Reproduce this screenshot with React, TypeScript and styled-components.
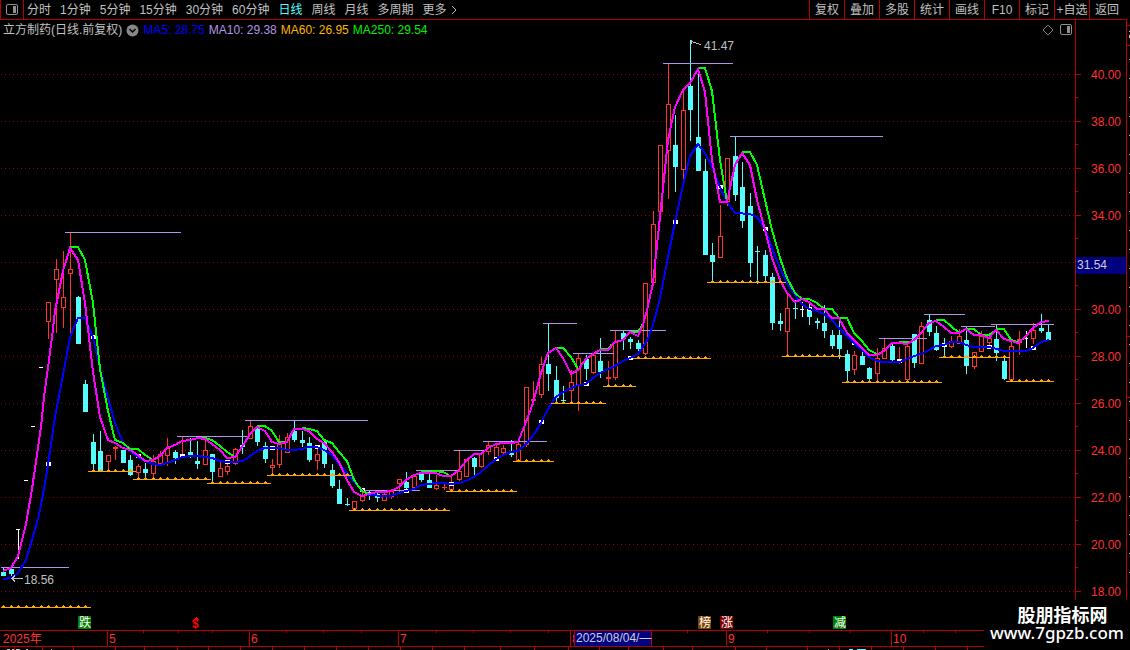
import React from "react";
import styled, { createGlobalStyle } from "styled-components";

const SANS = '"Liberation Sans", "Noto Sans CJK SC", sans-serif';
const RED = "#b80000";

const GlobalStyle = createGlobalStyle`
  body {
    margin: 0;
    background: #000;
    color: #c0c0c0;
    font: 12px/16px ${SANS};
    overflow: hidden;
  }
`;

/* ---------- data ---------- */

type Kind = "u" | "d" | "w";
type Candle = [Kind, number, number, number, number];

// kind, high, body top, body bottom, low (one entry per trading day)
const candles: Candle[] = [
  ["d", 567, 572, 576, 576], ["d", 567, 569, 574, 579], ["w", 529, 529, 530, 559],
  ["w", 480, 480, 481, 481], ["w", 426, 426, 427, 427], ["w", 367, 367, 368, 368],
  ["u", 302, 302, 322, 339], ["u", 259, 269, 280, 333], ["u", 251, 297, 308, 328],
  ["u", 232, 269, 274, 336], ["d", 296, 297, 344, 344], ["d", 380, 384, 412, 412],
  ["d", 434, 442, 464, 470], ["d", 431, 451, 471, 471], ["u", 455, 455, 462, 470],
  ["u", 446, 447, 449, 460], ["d", 450, 450, 463, 463], ["d", 455, 460, 475, 476],
  ["u", 464, 466, 473, 478], ["d", 463, 469, 473, 477], ["u", 455, 461, 474, 479],
  ["u", 451, 454, 464, 464], ["u", 438, 448, 456, 466], ["d", 450, 452, 458, 464],
  ["u", 437, 454, 456, 456], ["d", 438, 452, 455, 458], ["d", 441, 461, 464, 469],
  ["u", 438, 450, 465, 465], ["d", 454, 454, 472, 483], ["u", 462, 468, 477, 477],
  ["u", 463, 466, 472, 475], ["u", 448, 449, 464, 465], ["d", 430, 445, 447, 454],
  ["u", 420, 426, 439, 439], ["d", 427, 429, 442, 446], ["d", 442, 446, 459, 463],
  ["u", 459, 465, 468, 473], ["u", 435, 443, 465, 468], ["u", 433, 437, 453, 453],
  ["d", 421, 431, 440, 442], ["d", 431, 440, 443, 447], ["d", 437, 443, 460, 462],
  ["u", 447, 454, 461, 470], ["d", 440, 442, 464, 468], ["d", 464, 470, 486, 488],
  ["d", 480, 489, 504, 504], ["d", 498, 504, 505, 506], ["u", 501, 501, 509, 509],
  ["u", 492, 495, 501, 502], ["d", 490, 492, 495, 500], ["d", 493, 494, 498, 502],
  ["u", 492, 494, 501, 501], ["u", 489, 491, 497, 499], ["u", 479, 479, 484, 492],
  ["d", 472, 482, 488, 490], ["u", 475, 476, 488, 488], ["d", 472, 473, 480, 482],
  ["d", 474, 480, 488, 488], ["u", 475, 485, 489, 490], ["u", 483, 487, 488, 490],
  ["u", 477, 485, 490, 490], ["u", 451, 471, 480, 481], ["u", 459, 459, 477, 477],
  ["d", 457, 458, 467, 475], ["u", 452, 453, 467, 468], ["u", 442, 445, 452, 455],
  ["u", 445, 447, 459, 460], ["u", 445, 448, 453, 454], ["d", 440, 452, 455, 457],
  ["u", 442, 444, 462, 462], ["u", 387, 387, 445, 447], ["u", 381, 399, 401, 401],
  ["u", 357, 364, 395, 398], ["d", 323, 364, 374, 391], ["d", 366, 380, 398, 403],
  ["d", 386, 400, 401, 403], ["u", 370, 382, 391, 401], ["u", 353, 358, 385, 411],
  ["d", 355, 359, 369, 380], ["u", 354, 355, 373, 374], ["d", 338, 361, 372, 378],
  ["u", 361, 377, 379, 386], ["u", 331, 342, 378, 380], ["d", 331, 333, 339, 350],
  ["d", 337, 339, 342, 349], ["d", 340, 343, 349, 354], ["u", 283, 283, 354, 355],
  ["u", 211, 224, 283, 286], ["u", 145, 145, 212, 212], ["u", 63, 104, 151, 199],
  ["d", 115, 145, 167, 192], ["u", 90, 110, 170, 180], ["d", 40, 86, 110, 141],
  ["d", 74, 137, 171, 171], ["d", 159, 171, 255, 255], ["d", 243, 255, 262, 281],
  ["u", 205, 236, 258, 258], ["u", 158, 158, 202, 206], ["d", 137, 156, 195, 201],
  ["d", 162, 187, 221, 228], ["d", 193, 206, 263, 277], ["d", 246, 251, 252, 284],
  ["d", 250, 255, 276, 282], ["d", 273, 277, 323, 330], ["d", 313, 321, 324, 331],
  ["u", 295, 308, 332, 356], ["d", 300, 308, 309, 319], ["w", 302, 309, 310, 317],
  ["d", 303, 307, 317, 325], ["d", 318, 321, 323, 329], ["d", 305, 323, 331, 338],
  ["d", 330, 335, 346, 349], ["d", 320, 335, 349, 359], ["d", 350, 354, 371, 382],
  ["u", 351, 355, 370, 375], ["d", 347, 356, 365, 365], ["d", 367, 368, 379, 382],
  ["u", 348, 358, 374, 382], ["u", 338, 348, 359, 359], ["d", 343, 346, 360, 361],
  ["u", 347, 361, 362, 364], ["u", 345, 346, 380, 380], ["d", 334, 334, 363, 368],
  ["u", 322, 326, 364, 364], ["d", 314, 320, 332, 336], ["d", 326, 333, 350, 351],
  ["d", 338, 344, 346, 355], ["u", 336, 341, 347, 348], ["u", 329, 336, 344, 344],
  ["d", 327, 340, 366, 374], ["u", 352, 352, 367, 369], ["u", 331, 336, 352, 352],
  ["u", 334, 338, 343, 347], ["d", 325, 339, 353, 361], ["d", 356, 361, 379, 380],
  ["u", 342, 346, 380, 380], ["u", 331, 339, 343, 355], ["w", 331, 338, 339, 348],
  ["u", 323, 330, 339, 344], ["d", 314, 328, 331, 333], ["d", 325, 332, 340, 340],
];

const dayX = (i: number) => Math.round(3.26 + 7.465 * i);

const magenta =
  "3,571 11,568 18,556 26,524 32,489 41,427 44,397 49,360 52,337 55,311 63,271 70,248 78,260 85,303 93,372 100,417 108,440 115,443 123,448 130,450 138,455 145,461 153,460 160,456 167,448 175,445 182,441 190,440 198,438 205,439 212,444 220,450 227,458 235,457 242,447 250,434 257,427 265,431 272,442 279,444 287,442 294,429 302,429 309,431 317,439 324,443 332,452 339,462 347,480 354,492 362,496 369,494 377,492 384,492 391,491 399,487 406,480 414,475 421,473 429,473 436,473 443,476 451,476 459,470 466,461 474,454 481,454 488,448 496,444 503,443 511,443 518,442 526,422 533,403 541,373 548,353 556,348 563,358 571,374 578,370 586,359 593,354 600,350 608,350 615,342 623,340 630,332 638,336 643,325 647,310 653,283 660,217 668,140 675,107 683,90 690,83 698,69 705,92 712,160 720,202 727,202 735,165 742,153 750,165 757,200 765,230 772,258 780,280 787,293 795,302 802,299 809,302 817,309 824,309 832,318 839,318 847,333 854,340 862,348 869,355 877,355 884,351 892,343 899,343 907,344 914,340 921,333 929,323 936,321 944,327 951,333 959,333 966,329 974,335 981,335 989,338 996,330 1004,339 1011,341 1018,343 1026,336 1033,328 1041,322 1049,321";

const blue =
  "3,579 11,578 18,573 26,560 32,540 39,515 44,489 48,465 55,417 63,375 70,337 78,318 85,318 93,337 100,368 108,398 115,423 123,443 130,451 138,457 145,461 153,464 160,465 167,463 175,460 182,457 190,456 200,456 205,457 212,458 220,461 227,462 235,462 243,461 250,456 257,451 265,448 279,448 287,450 294,450 302,449 309,447 317,447 324,450 332,455 339,464 347,473 354,482 362,490 369,495 384,496 391,496 399,493 406,491 414,489 421,485 429,484 436,483 443,483 451,484 459,483 466,481 474,477 481,472 488,466 496,459 503,455 511,452 518,451 526,444 533,436 541,423 548,409 556,397 563,392 571,388 578,385 586,384 593,378 600,373 608,369 615,366 623,361 630,358 638,354 647,341 653,325 657,310 660,298 668,257 675,222 683,185 690,156 698,144 705,153 712,167 720,187 727,202 735,213 750,214 757,217 765,229 772,248 780,268 788,285 798,299 802,304 809,309 817,311 824,314 832,320 839,328 847,336 854,343 862,350 869,357 877,361 884,362 900,362 907,359 914,356 921,354 929,350 936,346 944,345 951,342 959,342 966,345 974,347 989,347 1004,351 1026,351 1033,348 1041,342 1049,340";

const greens = [
  "70,247 78,247 85,260 93,303 100,369 108,411 115,440 123,443 130,449 138,449 145,455 153,460",
  "198,438 205,438 212,440 220,446 227,452 235,457",
  "257,426 265,426 272,431 279,442 287,442",
  "302,428 309,429 317,431 324,440 332,443 339,452 347,461 354,480 362,491 369,494",
  "421,471 429,472 436,471 443,472 449,475",
  "556,348 563,348 571,357 578,369",
  "600,349 608,349 612,344",
  "630,332 638,332 643,324",
  "698,68 705,68 712,91 720,160 727,202",
  "742,152 750,152 757,165 765,200 772,230 780,258 787,278 795,293 802,299 809,299 817,303 824,309 832,309 839,318 847,318 854,333 862,341 869,350 877,354",
  "899,342 910,342 914,340",
  "936,320 944,320 951,326 959,333",
  "966,329 974,329 981,335 989,335 996,330",
  "996,329 1004,329 1011,340 1018,342 1026,337",
];

// y, start, end
const highs = [
  [567, 1, 69], [232, 65, 181], [436, 177, 249], [420, 245, 368], [490, 364, 420],
  [470, 416, 458], [450, 454, 487], [441, 483, 547], [323, 543, 577], [353, 573, 614],
  [330, 610, 666], [63, 663, 733], [136, 730, 883], [338, 879, 927], [314, 924, 965],
  [326, 961, 995], [324, 991, 1054],
];
const lows = [
  [607, 1, 91], [471, 88, 136], [479, 133, 211], [483, 207, 271], [475, 267, 352],
  [510, 349, 450], [491, 446, 517], [461, 513, 554], [403, 551, 606], [386, 603, 636],
  [358, 633, 711], [282, 707, 786], [356, 782, 845], [382, 842, 942], [357, 939, 1010],
  [381, 1006, 1054],
];
const marks = [
  [48, 464], [93, 337], [138, 456], [182, 456], [227, 462], [272, 448], [317, 447], [362, 490],
  [406, 491], [451, 484], [496, 459], [541, 422], [586, 384], [630, 358], [675, 222], [720, 187],
  [765, 229], [809, 309], [854, 343], [899, 361], [944, 345], [989, 347], [1033, 348],
];
const flags = [
  { x: 78, text: "跌", color: "#008000" },
  { x: 698, text: "榜", color: "#804000" },
  { x: 720, text: "涨", color: "#800000" },
  { x: 833, text: "减", color: "#008000" },
];

const prices = ["40.00", "38.00", "36.00", "34.00", "32.00", "30.00", "28.00", "26.00", "24.00", "22.00", "20.00", "18.00"];
const months = [[107, "5"], [249, "6"], [398, "7"], [570, "8"], [726, "9"], [891, "10"]] as const;
const weekTicks = [143, 178, 212, 286, 323, 361, 436, 473, 510, 548, 607, 687, 767, 809, 850, 923, 955];
const tabLines = [14, 42, 73, 115, 144, 177, 208, 240, 272, 304, 336, 368, 400, 432, 464, 500, 534, 568, 599, 628, 663, 692, 735, 766, 807, 839, 871, 903, 935, 967];

const periods = ["分时", "1分钟", "5分钟", "15分钟", "30分钟", "60分钟", "日线", "周线", "月线", "多周期"];
const tools = ["复权", "叠加", "多股", "统计", "画线", "F10", "标记", "+自选", "返回"];
const averages = [
  { text: "MA5: 28.75", color: "#0000ff" },
  { text: "MA10: 29.38", color: "#b494e8" },
  { text: "MA60: 26.95", color: "#ffb400" },
  { text: "MA250: 29.54", color: "#00f000" },
];

/* ---------- parts ---------- */

const Page = styled.main`
  position: relative;
  display: flex;
  flex-direction: column;
  min-height: 100vh;
  background: #000;
`;

const Toolbar = styled.nav`
  display: flex;
  justify-content: space-between;
  box-sizing: border-box;
  height: 20px;
  margin-right: 3px;
  border-bottom: 1px solid ${RED};
`;

const PlainButton = styled.button`
  display: flex;
  align-items: center;
  justify-content: center;
  padding: 0;
  border: 0;
  background: none;
  color: #c0c0c0;
  font: 12px/16px ${SANS};
  white-space: nowrap;
  cursor: pointer;
`;

const Periods = styled.div`
  display: flex;
  gap: 9px;
`;

const PanelButton = styled(PlainButton)`
  box-sizing: border-box;
  width: 24px;
  margin-right: -6px;
  border: solid ${RED};
  border-width: 0 1px;
`;

const PeriodButton = styled(PlainButton)<{ $active?: boolean }>`
  color: ${(p) => (p.$active ? "#54fcfc" : "#c0c0c0")};
`;

const Tools = styled.div`
  display: grid;
  grid-template-columns: repeat(9, 35px);
  padding-right: 3px;
`;

const ToolButton = styled(PlainButton)`
  border-left: 1px solid ${RED};
`;

const Body = styled.section`
  display: flex;
  height: 610px;
`;

const ChartPane = styled.div`
  flex: 1;
  min-width: 0;
`;

const ChartHeader = styled.header`
  display: flex;
  align-items: center;
  gap: 4px;
  height: 20px;
  padding: 0 3px;
  white-space: nowrap;
`;

const Title = styled.h1`
  margin: 0;
  color: #c0c0c0;
  font: 12px/16px ${SANS};
`;

const Average = styled.span<{ $color: string }>`
  color: ${(p) => p.$color};
`;

const HeaderActions = styled.div`
  display: flex;
  gap: 6px;
  margin-left: auto;
`;

const Plot = styled.svg`
  display: block;
  width: 100%;
  height: 590px;
  font: 12px ${SANS};
`;

const PriceAxis = styled.div`
  position: relative;
  box-sizing: border-box;
  width: 52px;
  padding-top: 31px;
  overflow: hidden;
  border: solid ${RED};
  border-width: 0 1px;
`;

const Price = styled.div`
  position: relative;
  height: 47px;
  padding-left: 15px;
  color: #ff3232;
  line-height: 48px;

  &::before,
  &::after {
    content: "";
    position: absolute;
    left: 0;
    top: 23px;
    width: 5px;
    height: 1px;
    background: ${RED};
  }

  &::after {
    top: 46px;
    width: 2px;
  }
`;

const PriceCursor = styled.output`
  position: absolute;
  top: 237px;
  left: 0;
  width: 100%;
  padding-left: 1px;
  background: #000080;
  color: #d0d0d0;
  line-height: 17px;
`;

const SideStrip = styled.svg`
  width: 3px;
  height: 610px;
`;

const TimeAxis = styled.svg`
  display: block;
  width: 100%;
  height: 20px;
  font: 12px ${SANS};
`;

const Brand = styled.a`
  position: absolute;
  right: 0;
  bottom: 0;
  box-sizing: border-box;
  width: 146px;
  height: 50px;
  padding-top: 4px;
  background: #000;
  color: #fff;
  text-align: center;
  text-decoration: none;
`;

const BrandName = styled.strong`
  display: block;
  padding-left: 11px;
  font: 700 18px/20px "Noto Sans CJK SC", sans-serif;
`;

const BrandSite = styled.span`
  display: block;
  font: 500 17px/18px "Noto Sans", sans-serif;
`;

const PanelIcon = ({ color }: { color: string }) => (
  <svg width="12" height="12" viewBox="0 0 12 12" aria-hidden="true">
    <rect x="0.5" y="0.5" width="11" height="10" rx="1.5" fill="none" stroke={color} />
    <rect x="7" y="2" width="3" height="7" fill={color} />
  </svg>
);

const CandleShape = ({ candle, x }: { candle: Candle; x: number }) => {
  const [kind, high, top, bottom, low] = candle;
  const color = kind === "u" ? "#ff3232" : kind === "d" ? "#54fcfc" : "#fff";
  const height = bottom - top;
  return (
    <g fill={color}>
      <rect x={x} y={high} width="1" height={Math.max(low - high, 1)} />
      <rect x={x - 2} y={top} width={kind === "w" ? 4 : 5} height={height} />
      {kind === "u" && height > 2 && <rect x={x - 1} y={top + 1} width="3" height={height - 2} fill="#000" />}
    </g>
  );
};

const CandleChart = () => (
  <Plot role="img" aria-label="立方制药 日线">
    <g transform="translate(0 -40)" shapeRendering="crispEdges">
      {prices.map((p, i) => (
        <line key={p} x1="1" x2="100%" y1={74.5 + i * 47} y2={74.5 + i * 47} stroke="#a00000" strokeDasharray="1 3" />
      ))}
      {candles.map((c, i) => (
        <CandleShape key={i} candle={c} x={dayX(i)} />
      ))}
      {highs.map(([y, a, b]) => (
        <rect key={a} x={a} y={y} width={b - a} height="1" fill="#b494e8" />
      ))}
      {marks.map(([x, y]) => (
        <rect key={x} x={x - 2} y={y - 2} width="5" height="4" fill="#fff" />
      ))}
      <g fill="none" strokeWidth="2">
        <polyline points={blue} stroke="#0000ff" />
        {greens.map((points) => (
          <polyline key={points} points={points} stroke="#00ff00" />
        ))}
        <polyline points={magenta} stroke="#ff00ff" />
      </g>
      {lows.map(([y, a, b]) => (
        <g key={a} fill="#ffa800">
          <rect x={a} y={y} width={b - a} height="1" />
          {candles.map((_, i) => {
            const x = dayX(i);
            return x > a && x < b - 3 ? (
              <path key={i} d={`M${x - 1} ${y}v-1h1v-1h1v1h1v1z`} />
            ) : null;
          })}
        </g>
      ))}
      <g fill="none" stroke="#c0c0c0">
        <path d="M12 578.5h11M15 575.5l-3 3l3 3" />
        <path d="M691 41.5l10 3M695 39.5h-4v4" />
      </g>
      <g fill="#c0c0c0">
        <text x="24" y="584">18.56</text>
        <text x="704" y="50">41.47</text>
      </g>
      {flags.map((f) => (
        <g key={f.x}>
          <rect x={f.x} y="616" width="13" height="13" fill={f.color} />
          <text x={f.x + 1} y="627" fill="#fff">{f.text}</text>
        </g>
      ))}
      <path d="M196 617l-3 3h6z" fill="#ff0000" />
      <text x="192" y="628" fill="#ff0000" fontWeight="700">$</text>
    </g>
  </Plot>
);

export default function App() {
  return (
    <>
      <GlobalStyle />
      <Page>
        <Toolbar aria-label="周期">
          <Periods>
            <PanelButton aria-label="侧栏"><PanelIcon color="#909090" /></PanelButton>
            {periods.map((p) => (
              <PeriodButton key={p} $active={p === "日线"}>{p}</PeriodButton>
            ))}
            <PeriodButton>
              更多
              <svg width="11" height="12" viewBox="0 0 11 12" aria-hidden="true">
                <path d="M5 2l4 4l-4 4" fill="none" stroke="#c0c0c0" />
              </svg>
            </PeriodButton>
          </Periods>
          <Tools>
            {tools.map((t) => (
              <ToolButton key={t}>{t}</ToolButton>
            ))}
          </Tools>
        </Toolbar>
        <Body>
          <ChartPane>
            <ChartHeader>
              <Title>立方制药(日线.前复权)</Title>
              <PlainButton aria-label="选择指标">
                <svg width="13" height="13" viewBox="0 0 13 13" aria-hidden="true">
                  <circle cx="6.5" cy="6.5" r="6" fill="#888" />
                  <path d="M3.5 5l3 3l3-3" fill="none" stroke="#000" strokeWidth="1.5" />
                </svg>
              </PlainButton>
              {averages.map((a) => (
                <Average key={a.text} $color={a.color}>{a.text}</Average>
              ))}
              <HeaderActions>
                <PlainButton aria-label="标注">
                  <svg width="12" height="12" viewBox="0 0 12 12" aria-hidden="true">
                    <path d="M6 1l5 5l-5 5l-5-5z" fill="none" stroke="#808080" />
                  </svg>
                </PlainButton>
                <PlainButton aria-label="面板"><PanelIcon color="#909090" /></PlainButton>
              </HeaderActions>
            </ChartHeader>
            <CandleChart />
          </ChartPane>
          <PriceAxis>
            {prices.map((p) => (
              <Price key={p}>{p === "32.00" ? "" : p}</Price>
            ))}
            <PriceCursor>31.54</PriceCursor>
          </PriceAxis>
          <SideStrip shapeRendering="crispEdges" aria-hidden="true">
            {[5, 25, 316, 377].map((y) => (
              <rect key={y} y={y} width="3" height="1" fill={RED} />
            ))}
            <path d="M2 11v1M2 15v3" stroke="#c0c0c0" />
            {Array.from({ length: 28 }, (_, i) => (
              <rect key={i} x="2" y={39 + i * 19} width="1" height="1" fill="#c0c0c0" />
            ))}
          </SideStrip>
        </Body>
        <TimeAxis shapeRendering="crispEdges" role="img" aria-label="时间轴">
          <g fill={RED}>
            <rect width="100%" height="1" />
            <rect y="16" width="100%" height="1" />
            {weekTicks.map((x) => (
              <rect key={x} x={x} y="1" width="1" height="2" />
            ))}
            {tabLines.map((x) => (
              <rect key={x} x={x} y="17" width="1" height="3" />
            ))}
          </g>
          <g fill="#ff3232">
            <text x="3" y="13">2025年</text>
            {months.map(([x, label]) => (
              <React.Fragment key={label}>
                <rect x={x} y="1" width="1" height="15" fill={RED} />
                <text x={x + 2} y="13">{label}</text>
              </React.Fragment>
            ))}
          </g>
          <rect x="574" y="1" width="78" height="15" fill={RED} />
          <rect x="575" y="1" width="76" height="15" fill="#000080" />
          <text x="576" y="12" fill="#d0d0d0">2025/08/04/—</text>
          <path d="M7 19.5h3M12 19.5h2M16 19.5h4M26 19.5h2M51 19.5h1M828 19.5h1" stroke="#c0c0c0" />
          <path d="M849 19.5h4M857 19.5h9" stroke="#54fcfc" />
        </TimeAxis>
        <Brand href="#">
          <BrandName>股朋指标网</BrandName>
          <BrandSite>www.7gpzb.com</BrandSite>
        </Brand>
      </Page>
    </>
  );
}
